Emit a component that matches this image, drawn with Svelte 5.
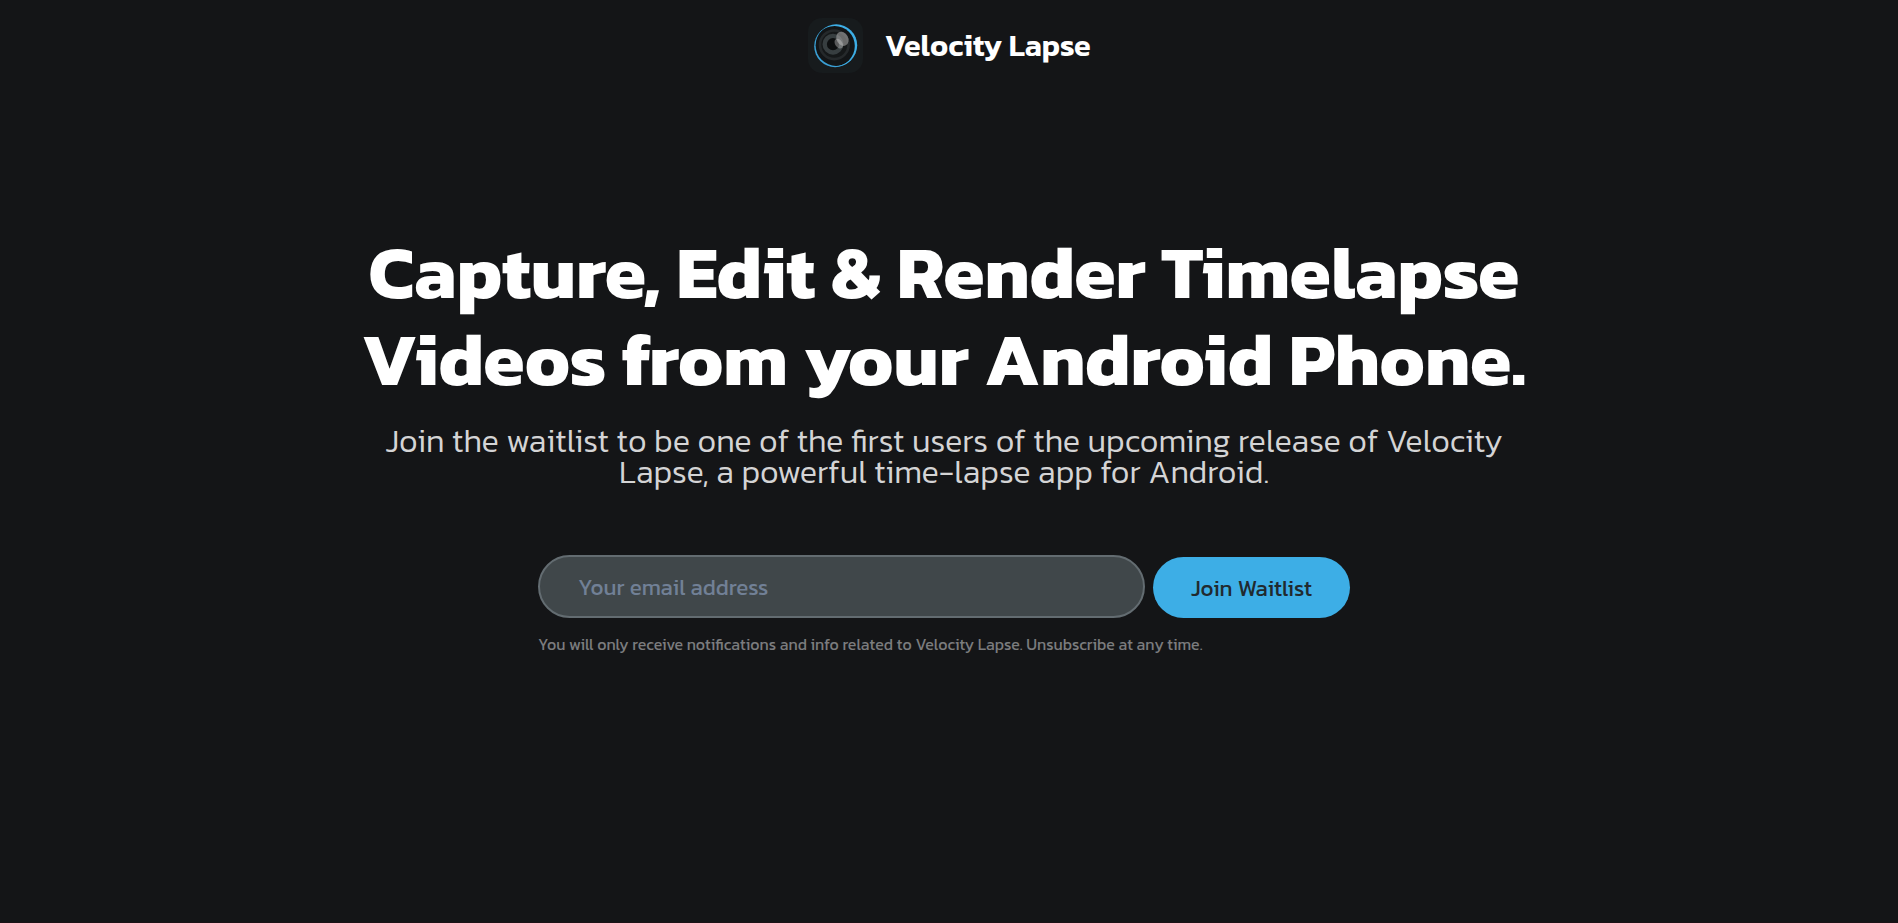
<script>
  const headline = ['Capture, Edit & Render Timelapse', 'Videos from your Android Phone.'];
  const intro = [
    'Join the waitlist to be one of the first users of the upcoming release of Velocity',
    'Lapse, a powerful time-lapse app for Android.'
  ];
</script>

<div class="page">
  <header>
    <svg class="logo" viewBox="0 0 55 55" aria-hidden="true">
      <defs>
        <mask id="right-crescent">
          <rect width="55" height="55" fill="#fff" />
          <circle cx="26.6" cy="28.1" r="20.2" fill="#000" />
        </mask>
      </defs>
      <rect width="55" height="55" rx="14" fill="#171b1d" />
      <circle cx="27.1" cy="28.3" r="20.9" fill="#3a9fd4" />
      <circle cx="28.2" cy="27.3" r="20.6" fill="#121517" />
      <circle cx="28.2" cy="27.3" r="21" fill="#3daee6" mask="url(#right-crescent)" />
      <circle cx="26.3" cy="26.8" r="14.3" fill="#151819" stroke="#25292b" stroke-width="2.6" />
      <circle cx="25" cy="26.2" r="8.3" fill="#0d0f10" stroke="#373e40" stroke-width="4.4" />
      <ellipse cx="34.4" cy="20.8" rx="5.8" ry="7.4" fill="#a0a0a0" opacity=".62" transform="rotate(-28 34.4 20.8)" />
      <ellipse cx="30.8" cy="25.7" rx="3.6" ry="5.4" fill="#c4c4c4" opacity=".42" transform="rotate(-35 30.8 25.7)" />
    </svg>
    <span class="brand">Velocity Lapse</span>
  </header>

  <main>
    <h1>{#each headline as line}<span>{line}</span>{/each}</h1>
    <p class="intro">{#each intro as line}<span>{line}</span>{/each}</p>
    <form onsubmit={(e) => e.preventDefault()}>
      <div class="row">
        <input type="email" placeholder="Your email address" aria-label="Your email address" />
        <button type="submit">Join Waitlist</button>
      </div>
      <p class="note">
        You will only receive notifications and info related to Velocity Lapse. Unsubscribe at any time.
      </p>
    </form>
  </main>
</div>

<style>
  :global(body) {
    margin: 0;
    background: #141517;
  }
  .page {
    box-sizing: border-box;
    min-height: 100vh;
    border-bottom: 1px solid #1b1216;
    font-family: Kanit, 'Noto Sans', sans-serif;
    color: #fff;
  }
  header {
    display: flex;
    justify-content: center;
    align-items: center;
    gap: 21.5px;
    height: 91px;
    padding-left: 1px;
  }
  .logo {
    width: 55px;
    height: 55px;
    flex: none;
  }
  .brand {
    padding-bottom: 2px;
    font-size: 30.5px;
    font-weight: 600;
    line-height: 40px;
  }
  main {
    display: flex;
    flex-direction: column;
    align-items: center;
    padding: 137px 10px 0 0;
  }
  h1,
  p {
    margin: 0;
  }
  h1 span,
  .intro span {
    display: block;
    white-space: nowrap;
    text-align: center;
  }
  h1 {
    font-size: 75px;
    font-weight: 700;
    line-height: 87px;
  }
  .intro {
    margin-top: 23px;
    font-size: 32.5px;
    font-weight: 300;
    line-height: 31.2px;
    color: #d4d4d5;
  }
  form {
    width: 812px;
    margin-top: 67.6px;
  }
  .row {
    display: flex;
    align-items: flex-end;
    gap: 8px;
  }
  input,
  button {
    box-sizing: border-box;
    margin: 0;
    font-family: inherit;
    font-size: 22.4px;
    font-weight: 400;
    border-radius: 32px;
  }
  input {
    width: 607px;
    height: 63px;
    padding: 0 38px;
    border: 2px solid #636c71;
    background: #40474a;
    color: #fff;
    outline: none;
  }
  input::placeholder {
    color: #718096;
    opacity: 1;
  }
  button {
    flex: 1;
    height: 61px;
    padding: 0;
    border: 0;
    background: #3daee6;
    color: #212a2f;
  }
  .note {
    margin-top: 14px;
    font-size: 15.94px;
    font-weight: 400;
    line-height: 24px;
    white-space: nowrap;
    color: #7b7c7e;
  }
</style>
